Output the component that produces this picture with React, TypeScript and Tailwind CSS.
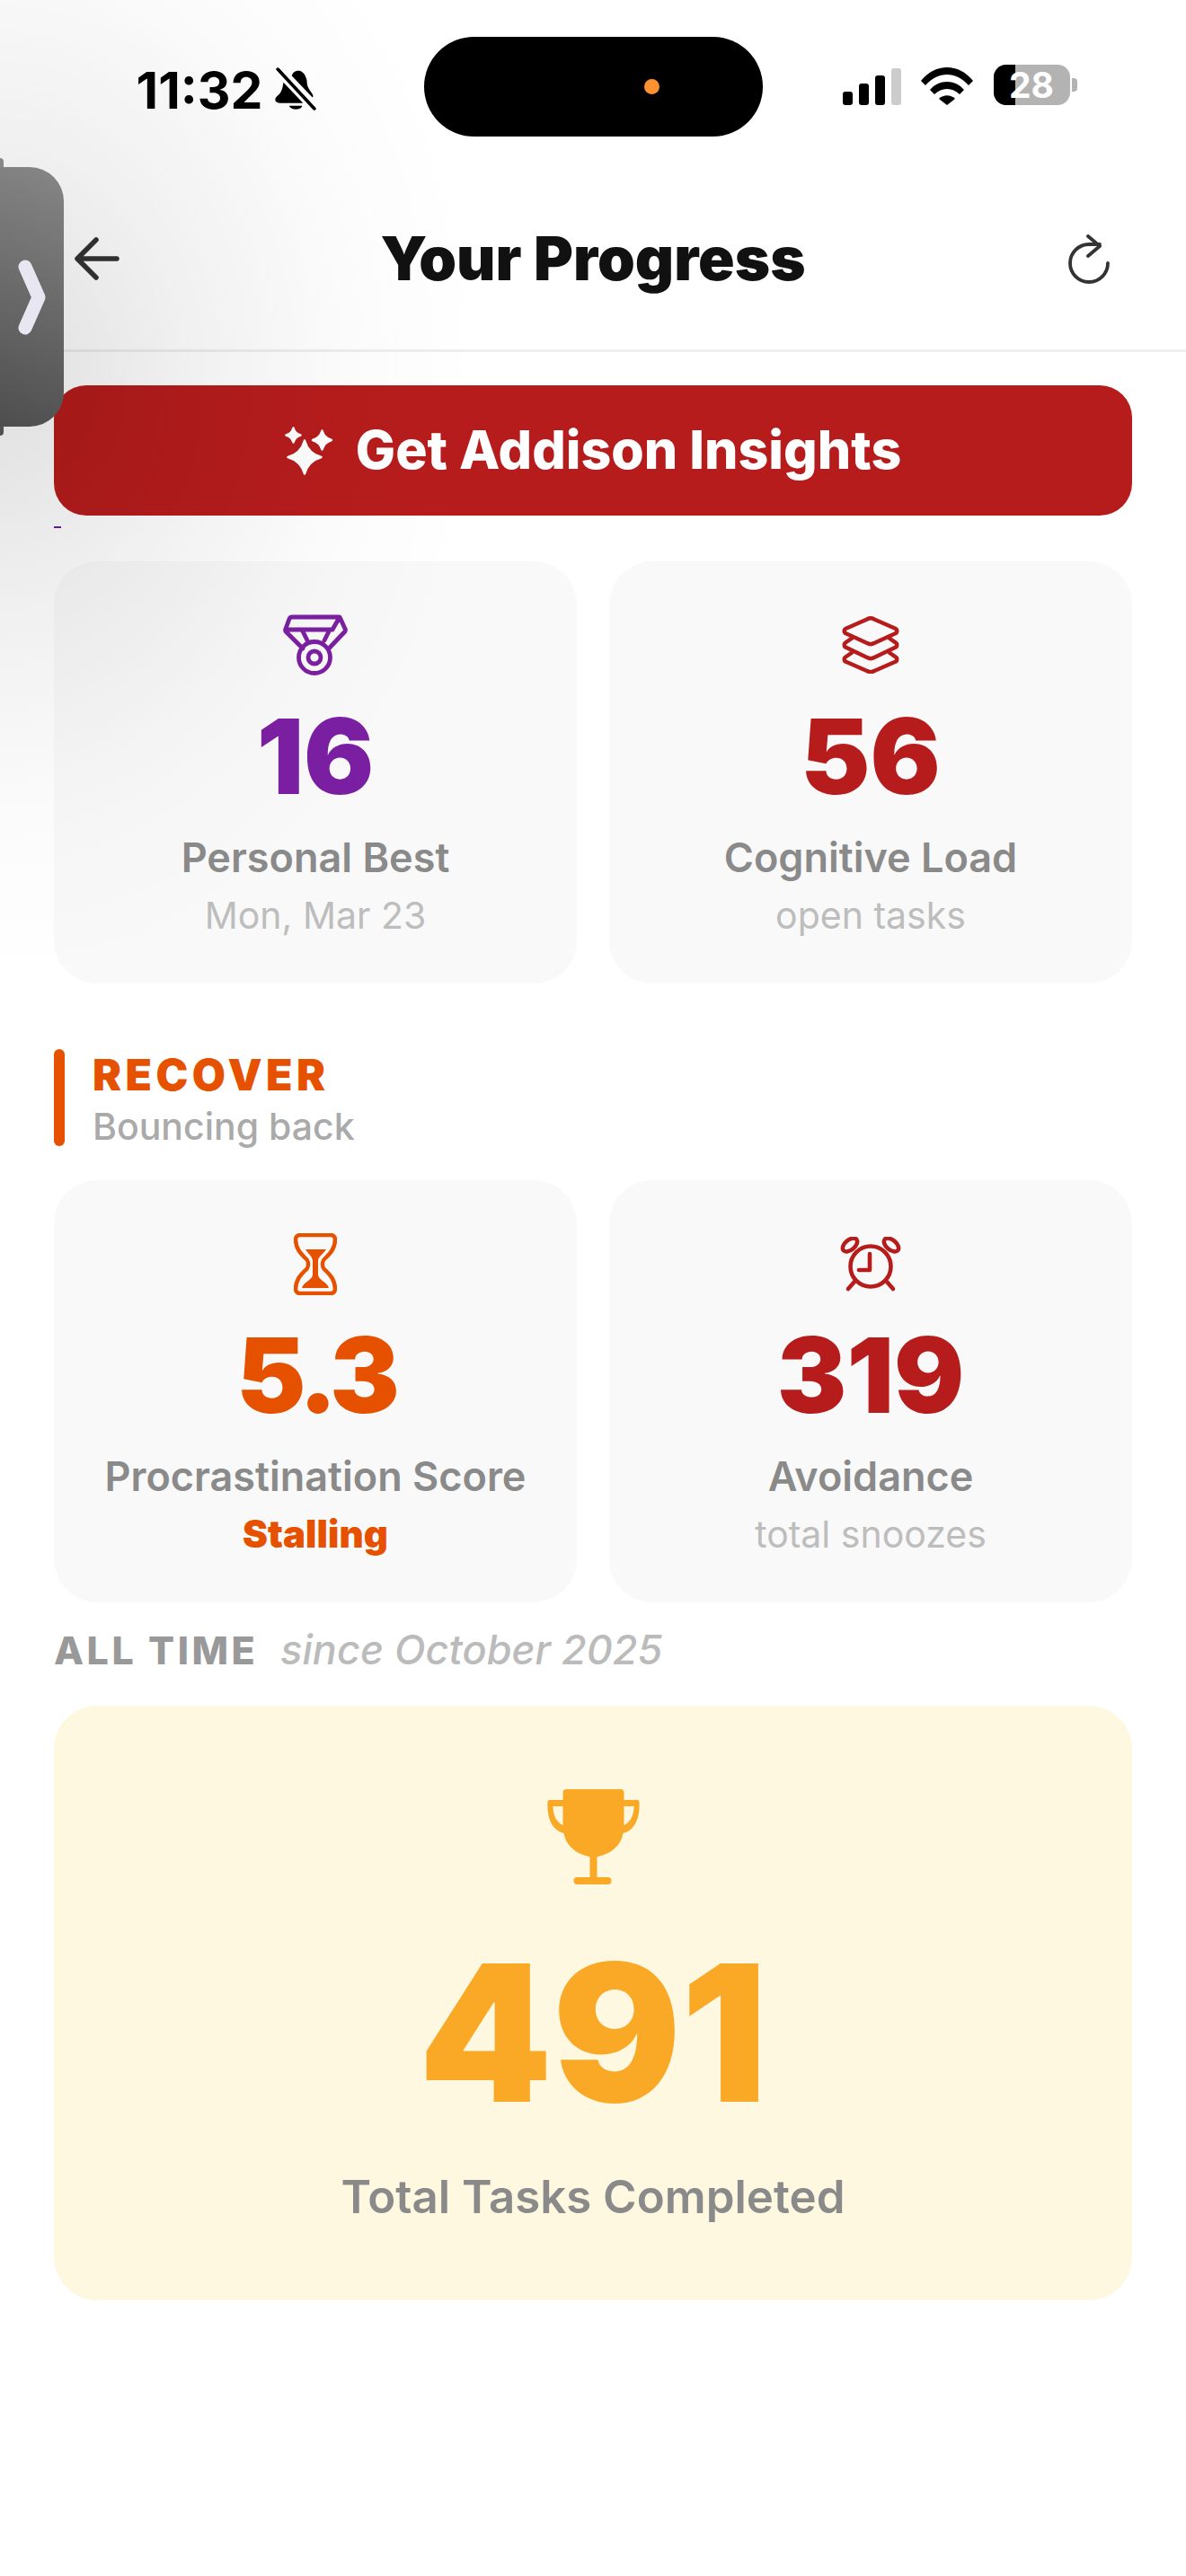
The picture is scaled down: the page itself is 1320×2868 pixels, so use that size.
import React from "react";

const inter = "font-['Inter','Liberation_Sans',sans-serif]";

function Medal() {
  return (
    <svg viewBox="0 0 72 68" className="w-[72px] h-[68px]" fill="none" stroke="#7B1FA2" strokeWidth="4.800" strokeLinejoin="round" strokeLinecap="round">
      <path d="M11 3h50a3 3 0 0 1 3 2l5 11a3 3 0 0 1 0 3L51 38M3 16l4-11a4 4 0 0 1 4-2M3 16a3 3 0 0 0 0 3l19 19M3 17h52l8-14M21 17l6 12M52 17l-6 12" />
      <circle cx="35" cy="48" r="17.500" />
      <circle cx="35" cy="48" r="7" />
    </svg>
  );
}

function Layers() {
  return (
    <svg viewBox="0 0 64 64" className="w-[64px] h-[64px]" fill="none" stroke="#B71C1C" strokeWidth="4.500" strokeLinejoin="round">
      <path d="M28 3.500a8 8 0 0 1 8 0L60 14a3 3 0 0 1 0 5L36 30a8 8 0 0 1-8 0L4 19a3 3 0 0 1 0-5z" />
      <path d="M12 24l-8 5.500a3 3 0 0 0 0 5L28 46a8 8 0 0 0 8 0l24-11.500a3 3 0 0 0 0-5L52 24" />
      <path d="M12 40l-8 5.500a3 3 0 0 0 0 5L28 61a8 8 0 0 0 8 0l24-10.500a3 3 0 0 0 0-5L52 40" />
    </svg>
  );
}

function Hourglass() {
  return (
    <svg viewBox="0 0 48 69" className="w-[48px] h-[69px]" fill="none" stroke="#E65100" strokeWidth="4.500" strokeLinejoin="round">
      <path d="M7 2h34a5 5 0 0 1 5 5c0 10-6 16-10 20-4 3-4 5-4 7.500s0 4.500 4 7.500c4 4 10 10 10 20a5 5 0 0 1-5 5H7a5 5 0 0 1-5-5c0-10 6-16 10-20 4-3 4-5 4-7.500s0-4.500-4-7.500C8 23 2 17 2 7a5 5 0 0 1 5-5z" />
      <path fill="#E65100" stroke="none" d="M13 18h23c-3 5-9 8-9 13v15c0 6 10 8 12 15H9c2-7 12-9 12-15V31c0-5-5-8-8-13z" />
    </svg>
  );
}

function Alarm() {
  return (
    <svg viewBox="0 0 70 62" className="w-[70px] h-[62px] mt-[2px]" fill="none" stroke="#B71C1C" strokeWidth="4.600" strokeLinecap="round" strokeLinejoin="round">
      <circle cx="35" cy="33" r="22.500" />
      <path d="M34 19v18H22M17 50l-7 8M53 50l7 8" />
      <ellipse cx="12" cy="9" rx="9.500" ry="5.500" transform="rotate(-40 12 9)" />
      <ellipse cx="58" cy="9" rx="9.500" ry="5.500" transform="rotate(40 58 9)" />
    </svg>
  );
}

function Trophy() {
  return (
    <svg viewBox="0 0 104 106" className="w-[107px] h-[106px]" fill="#FAA926">
      <path fillRule="evenodd" d="M22 0h60a4 4 0 0 1 4 4v8h15a2 2 0 0 1 2 2c1 18-5 32-18 35-2 13-13 23-28 26a1 1 0 0 0-1 1v22h12a4 4 0 0 1 0 8H34a4 4 0 0 1 0-8h14V76a1 1 0 0 0-1-1C32 72 21 62 19 49 6 46 0 32 1 14a2 2 0 0 1 2-2h15V4a4 4 0 0 1 4-4zM7 19c0 10 4 18 11 21V19zM86 19v21c7-3 11-11 11-21z" />
    </svg>
  );
}

function star(cx: number, cy: number, r: number) {
  const k = r * 0.22;
  return `M${cx} ${cy - r}Q${cx + k} ${cy - k} ${cx + r} ${cy}Q${cx + k} ${cy + k} ${cx} ${cy + r}Q${cx - k} ${cy + k} ${cx - r} ${cy}Q${cx - k} ${cy - k} ${cx} ${cy - r}Z`;
}

function Sparkle() {
  return (
    <svg viewBox="0 0 54 54" className="w-[54px] h-[54px]" fill="#fff" stroke="#fff" strokeWidth="2.500" strokeLinejoin="round">
      <path d={star(22, 34, 18.5)} />
      <path d={star(9.5, 9.5, 8)} />
      <path d={star(41.5, 15, 10.5)} />
    </svg>
  );
}

function Card({ icon, value, valueColor, label, sub, subClass }: { icon: React.ReactNode; value: string; valueColor: string; label: string; sub: string; subClass: string }) {
  return (
    <div className="h-[470px] rounded-[48px] bg-[#F9F9F9] flex flex-col items-center pt-[59px]">
      <div className="h-[68px] flex items-center justify-center">{icon}</div>
      <div className={`mt-[30px] text-[116px] leading-[120px] font-black ${valueColor}`}>{value}</div>
      <div className="mt-[26px] text-[45px] leading-[54px] font-semibold text-[#8A8A8A]">{label}</div>
      <div className={`mt-[13px] leading-[48px] ${subClass}`}>{sub}</div>
    </div>
  );
}

export default function App() {
  return (
    <div className={`relative w-[1320px] h-[2868px] overflow-hidden bg-white ${inter}`}>
      <div className="grid grid-cols-[1fr_377px_1fr] pt-[41px] h-[193px]">
        <div className="flex items-start justify-end pt-[28px] pr-[120px] gap-[13px]">
          <span className="text-[57px] leading-[64px] font-bold text-black">11:32</span>
          <svg viewBox="0 0 44 46" className="w-[46px] h-[48px] mt-[6px]" fill="#000">
            <path d="M18 9c1-5 7-7 11-4 3 2 4 5 5 9 0 5 1 8 5 13 2 3 2 4 1 5zM9 16l21 22H5c-5 0-6-4-3-7 5-4 6-8 7-15zM15 41h14c-1 5-12 5-14 0z" />
            <path d="M3 2l39 42" stroke="#000" strokeWidth="3.500" strokeLinecap="round" />
            <path d="M6 0L44 41" stroke="#fff" strokeWidth="2" />
          </svg>
        </div>
        <div className="h-[111px] rounded-full bg-black flex items-center justify-end pr-[115px]">
          <div className="w-[17px] h-[17px] rounded-full bg-[#FF9230]" />
        </div>
        <div className="flex items-start pl-[89px] pt-[32px]">
          <div className="flex items-end gap-[7px] h-[44px]">
            <div className="w-[11px] h-[15px] rounded-[3px] bg-black" />
            <div className="w-[11px] h-[24px] rounded-[3px] bg-black" />
            <div className="w-[11px] h-[33px] rounded-[3px] bg-black" />
            <div className="w-[11px] h-[41px] rounded-[3px] bg-[#CCCCCC]" />
          </div>
          <svg viewBox="0 0 58 42" className="w-[58px] h-[42px] ml-[22px] mt-[2px]" fill="#000">
            <path d="M0 15C16-5 42-5 58 15l-5 5C39 4 19 4 5 20z" />
            <path d="M10 25c10-12 28-12 38 0l-5 5c-8-8-20-8-28 0z" />
            <path d="M20 35c5-5 13-5 18 0l-9 7z" />
          </svg>
          <div className="relative w-[85px] h-[45px] ml-[23px] -mt-[1px] rounded-[14px] overflow-hidden bg-[#B3B3B3] flex items-center justify-center">
            <div className="absolute left-0 top-0 h-full w-[24px] bg-black" />
            <span className="relative text-[39px] leading-[45px] font-bold text-white">28</span>
          </div>
          <div className="w-[6px] h-[15px] mt-[14px] ml-[2px] rounded-r-[4px] bg-[#B3B3B3]" />
        </div>
      </div>

      <header className="relative h-[199px] border-b-[3px] border-[#EEEEEE] pb-[6px] flex items-center justify-center">
        <h1 className="text-[67px] leading-[72px] font-black text-[#111111]">Your Progress</h1>
        <svg viewBox="0 0 50 48" className="absolute left-[83px] top-[71px] w-[50px] h-[48px]" fill="none" stroke="#333333" strokeWidth="5.500" strokeLinecap="round" strokeLinejoin="round">
          <path d="M47 24H3M24 3L3 24l21 21" />
        </svg>
        <svg viewBox="0 0 46 56" className="absolute left-[1189px] top-[68px] w-[46px] h-[56px]" fill="none" stroke="#333333" strokeWidth="3.800" strokeLinecap="round" strokeLinejoin="round">
          <path d="M44 32a21 21 0 1 1-21-21h12M22 2l13 11-13 11" />
        </svg>
      </header>

      <main className="px-[60px] pt-[37px]">
        <button className="w-full h-[145px] rounded-[36px] bg-[#B71C1C] flex items-center justify-center gap-[25px] text-white text-[59px] font-extrabold">
          <Sparkle />
          <span>Get Addison Insights</span>
        </button>

        <div className="grid grid-cols-2 gap-[36px] mt-[51px]">
          <Card icon={<Medal />} value="16" valueColor="text-[#7B1FA2]" label="Personal Best" sub="Mon, Mar 23" subClass="text-[41px] text-[#BDBDBD]" />
          <Card icon={<Layers />} value="56" valueColor="text-[#B71C1C]" label="Cognitive Load" sub="open tasks" subClass="text-[41px] text-[#BDBDBD]" />
        </div>

        <div className="flex items-stretch mt-[73px] h-[108px]">
          <div className="w-[12px] rounded-full bg-[#E65100]" />
          <div className="ml-[31px] pt-[1px] flex flex-col">
            <span className="text-[48px] leading-[56px] font-black text-[#E65100] tracking-[4.5px]">RECOVER</span>
            <span className="mt-[3px] text-[41px] leading-[52px] font-medium text-[#AAAAAA]">Bouncing back</span>
          </div>
        </div>

        <div className="grid grid-cols-2 gap-[36px] mt-[38px]">
          <Card icon={<Hourglass />} value="5.3" valueColor="text-[#E65100] tracking-[-6px]" label="Procrastination Score" sub="Stalling" subClass="text-[42px] text-[#E65100] font-black" />
          <Card icon={<Alarm />} value="319" valueColor="text-[#B71C1C]" label="Avoidance" sub="total snoozes" subClass="text-[41px] text-[#BDBDBD]" />
        </div>

        <div className="flex items-center gap-[25px] mt-[28px] h-[50px]">
          <span className="text-[43px] font-extrabold tracking-[3.500px] text-[#999999]">ALL TIME</span>
          <span className="text-[45px] italic font-medium text-[#BBBBBB]">since October 2025</span>
        </div>

        <div className="mt-[37px] h-[662px] rounded-[48px] bg-[#FFF8E1] flex flex-col items-center pt-[93px]">
          <Trophy />
          <div className="mt-[55px] text-[212px] leading-[220px] font-black text-[#FAA926]">491</div>
          <div className="mt-[43px] text-[51px] leading-[60px] font-semibold text-[#8A8A8A]">Total Tasks Completed</div>
        </div>
      </main>

      <div className="absolute left-[60px] top-[586px] w-[8px] h-[2px] bg-[#6A1B9A]" />

      <div className="absolute inset-0 pointer-events-none bg-[radial-gradient(ellipse_540px_680px_at_0px_420px,rgba(0,0,0,0.125)_0%,rgba(0,0,0,0.06)_38%,rgba(0,0,0,0.015)_72%,rgba(0,0,0,0)_100%)]" />

      <div className="absolute left-0 top-[176px] w-[4px] h-[12px] rounded-tr-[4px] bg-[#888888]" />
      <div className="absolute left-0 top-[473px] w-[4px] h-[12px] rounded-br-[4px] bg-[#505050]" />
      <div className="absolute left-0 top-[186px] w-[71px] h-[289px] rounded-r-[38px] bg-[linear-gradient(200deg,#868686,#4E4E4E)] flex items-center">
        <svg viewBox="0 0 31 84" className="ml-[20px] w-[31px] h-[84px]" fill="none" stroke="#E8E6F0" strokeWidth="15" strokeLinecap="round" strokeLinejoin="round">
          <path d="M8 8l15 34-15 34" />
        </svg>
      </div>
    </div>
  );
}
